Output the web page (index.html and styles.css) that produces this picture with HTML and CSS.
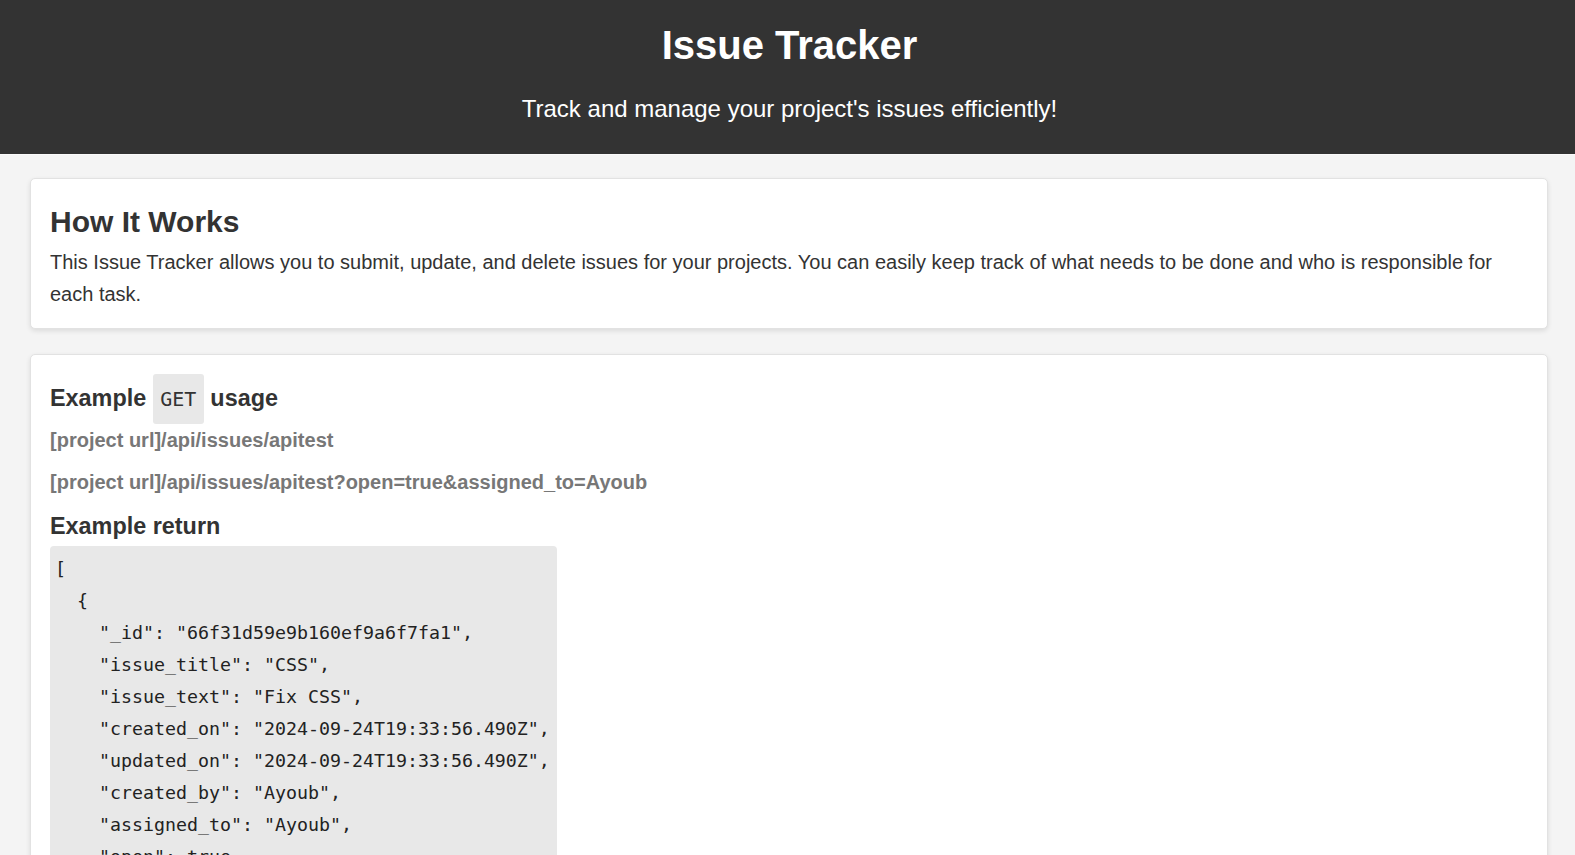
FILE: index.html
```html
<!DOCTYPE html>
<html lang="en">
<head>
<meta charset="utf-8">
<title>Issue Tracker</title>
<link rel="stylesheet" href="styles.css">
</head>
<body>
<header class="site-header">
  <h1 class="site-title">Issue Tracker</h1>
  <p class="site-tagline">Track and manage your project's issues efficiently!</p>
</header>
<main class="content">
  <section class="card">
    <h2 class="card-title">How It Works</h2>
    <p class="card-text">This Issue Tracker allows you to submit, update, and delete issues for your projects. You can easily keep track of what needs to be done and who is responsible for each task.</p>
  </section>
  <section class="card">
    <h3 class="sub-title">Example <code class="inline-code">GET</code> usage</h3>
    <p class="endpoint">[project url]/api/issues/apitest</p>
    <p class="endpoint">[project url]/api/issues/apitest?open=true&amp;assigned_to=Ayoub</p>
    <h3 class="sub-title">Example return</h3>
<pre class="code-block">[
  {
    "_id": "66f31d59e9b160ef9a6f7fa1",
    "issue_title": "CSS",
    "issue_text": "Fix CSS",
    "created_on": "2024-09-24T19:33:56.490Z",
    "updated_on": "2024-09-24T19:33:56.490Z",
    "created_by": "Ayoub",
    "assigned_to": "Ayoub",
    "open": true,
    "status_text": ""
  }
]</pre>
  </section>
</main>
</body>
</html>
```
FILE: styles.css
```css
html, body {
  margin: 0;
  padding: 0;
}
body {
  background: #f4f4f4;
  color: #333;
  font-family: "Liberation Sans", Arial, sans-serif;
  font-size: 20px;
  line-height: 1.6;
}
.site-header {
  background: #333;
  color: #fff;
  text-align: center;
  padding: 22px 20px 0 24px;
  height: 132px;
  border-bottom: 1px solid #fafafa;
}
.site-title {
  margin: 0;
  font-size: 40px;
  line-height: 46px;
  font-weight: bold;
}
.site-tagline {
  margin: 27px 0 0;
  font-size: 24px;
  line-height: 28px;
}
.content {
  display: flex;
  flex-direction: column;
  gap: 25px;
  padding: 23px 27px 0 30px;
}
.card {
  background: #fff;
  border: 1px solid #e2e2e2;
  border-radius: 5px;
  box-shadow: 0 2px 5px rgba(0, 0, 0, 0.1);
  padding: 19px 19px 18px;
}
.card-title {
  margin: 0;
  font-size: 30px;
  line-height: 48px;
}
.card-text {
  margin: 0;
}
.sub-title {
  margin: 0;
  font-size: 23.4px;
  line-height: 37.4px;
}
.inline-code {
  display: inline-block;
  background: #e8e8e8;
  border-radius: 3px;
  font-family: "DejaVu Sans Mono", "Liberation Mono", monospace;
  font-size: 20px;
  font-weight: normal;
  line-height: 30px;
  padding: 10px 7.5px;
  vertical-align: baseline;
}
.endpoint {
  margin: 0 0 10px;
  color: #777;
  font-weight: bold;
}
.code-block {
  display: inline-block;
  margin: 1px 0 0;
  background: #e8e8e8;
  border-radius: 4px;
  padding: 7px 7px 6px 5px;
  font-family: "DejaVu Sans Mono", "Liberation Mono", monospace;
  font-size: 18.27px;
  line-height: 32px;
  color: #222;
}
```
